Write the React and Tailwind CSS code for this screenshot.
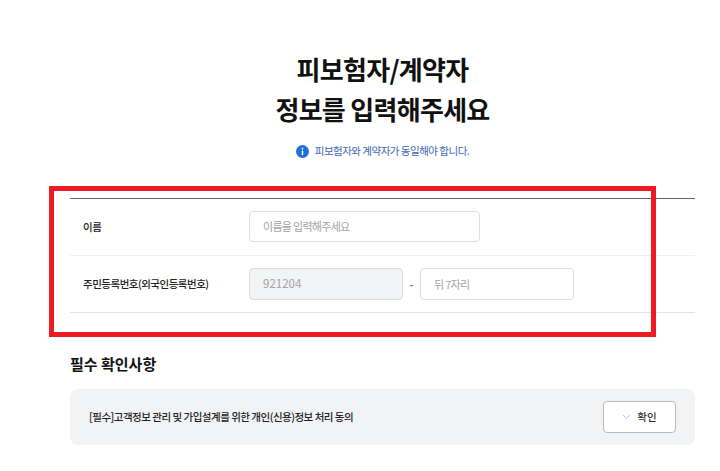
const font = { fontFamily: '"Noto Sans CJK KR", "Noto Sans", sans-serif' }

function InfoIcon() {
  return (
    <svg width="13" height="13" viewBox="0 0 13 13" className="shrink-0">
      <circle cx="6.5" cy="6.5" r="6.5" fill="#1f6fd6" />
      <rect x="5.7" y="2.8" width="1.6" height="1.7" rx="0.6" fill="#fff" />
      <rect x="5.7" y="5.6" width="1.6" height="4.6" rx="0.6" fill="#fff" />
    </svg>
  )
}

function Row({ label, children, border }) {
  return (
    <div className={`flex items-center h-[57px] ${border}`}>
      <div className="w-[179px] pl-[13px] text-[10.5px] tracking-[-0.5px] font-medium text-[#222]">{label}</div>
      {children}
    </div>
  )
}

function Field({ width, height, placeholder, disabled }) {
  return (
    <div
      className={`flex items-center pl-[13px] text-[#a3a3a3] border border-[#ddd] rounded-[4px] ${width} ${height} ${disabled ? 'bg-[#f2f3f5] text-[11.5px]' : 'bg-white text-[11px] tracking-[-0.7px]'}`}
    >
      {placeholder}
    </div>
  )
}

export default function App() {
  return (
    <div style={font} className="relative w-[720px] h-[471px] overflow-hidden bg-white">
      <div className="ml-[70px] w-[625px] pt-[49px]">
        <h1 className="text-center text-[26px] leading-[40px] font-bold text-[#111] tracking-[-0.7px]">
          피보험자/계약자<br />정보를 입력해주세요
        </h1>
        <div className="flex items-center justify-center gap-[6px] mt-[14px] h-[16px] text-[10.5px] tracking-[-0.5px] text-[#3a66b4]">
          <InfoIcon />
          <span>피보험자와 계약자가 동일해야 합니다.</span>
        </div>

        <div className="mt-[39px] border-t border-[#666]">
          <Row label="이름" border="border-b border-[#f0f0f0]">
            <div className="mb-[1px]">
              <Field width="w-[231px]" height="h-[31px]" placeholder="이름을 입력해주세요" />
            </div>
          </Row>
          <Row label="주민등록번호(외국인등록번호)" border="border-b border-[#e2e2e2]">
            <Field width="w-[154px]" height="h-[32px]" placeholder="921204" disabled />
            <span className="w-[17px] text-center text-[11px] font-bold text-[#777]">-</span>
            <Field width="w-[154px]" height="h-[32px]" placeholder="뒤 7자리" />
          </Row>
        </div>

        <h2 className="mt-[40px] text-[15px] leading-[22px] font-bold text-[#111]">필수 확인사항</h2>

        <div className="mt-[14px] flex items-center justify-between h-[56px] pl-[19px] pr-[19px] bg-[#f2f3f5] rounded-[8px]">
          <span className="text-[10.5px] tracking-[-0.5px] font-medium text-[#222]">[필수]고객정보 관리 및 가입설계를 위한 개인(신용)정보 처리 동의</span>
          <div className="flex items-center justify-center gap-[6px] w-[73px] h-[32px] bg-white border border-[#bbb] rounded-[4px] text-[10.5px] font-medium text-[#333]">
            <svg width="9" height="6" viewBox="0 0 9 6" fill="none">
              <path d="M1 1l3.5 3.5L8 1" stroke="#c4c4c4" strokeWidth="1" />
            </svg>
            확인
          </div>
        </div>
      </div>

      {/* 빨간 강조 박스 */}
      <div className="absolute left-[49px] top-[186px] w-[607px] h-[151px] border-[5px] border-[#ed1c24] pointer-events-none" />
    </div>
  )
}
